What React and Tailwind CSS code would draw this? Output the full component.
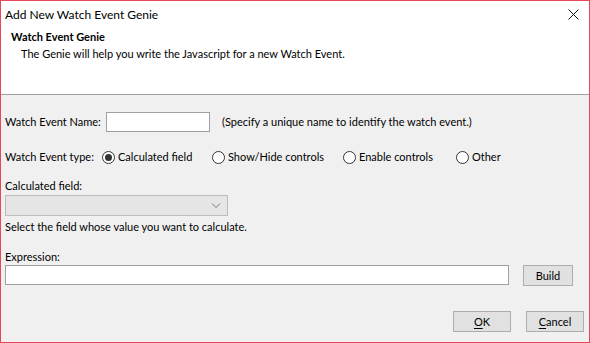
const font = { fontFamily: 'Lato, "Noto Sans", sans-serif' };

function Radio({ label, checked }) {
  return (
    <div className="flex items-center gap-[3px] whitespace-nowrap">
      <span className="w-[13px] h-[13px] shrink-0 rounded-full border border-[#333333] bg-white flex items-center justify-center">
        {checked && <span className="w-[7px] h-[7px] rounded-full bg-[#333333]" />}
      </span>
      <span>{label}</span>
    </div>
  );
}

function Button({ children, className = "" }) {
  return (
    <div
      className={
        "h-[21px] border border-[#adadad] bg-[#e1e1e1] flex items-center justify-center " +
        className
      }
    >
      {children}
    </div>
  );
}

export default function App() {
  return (
    <div
      className="w-[590px] h-[343px] border border-[#e8475b] bg-[#f0f0f0] flex flex-col text-[11px] text-black leading-[16px] whitespace-nowrap"
      style={font}
    >
      <div className="bg-white border-b border-[#a0a0a0] h-[94px] flex flex-col">
        <div className="h-[27px] flex items-center justify-between pl-[4px] pr-[10px]">
          <span className="text-[12px]">Add New Watch Event Genie</span>
          <svg width="11" height="11" viewBox="0 0 11 11">
            <path d="M0.5 0.5 L10.5 10.5 M10.5 0.5 L0.5 10.5" stroke="#111" strokeWidth="1" fill="none" />
          </svg>
        </div>
        <div className="pl-[10px] mt-[1px] font-bold">Watch Event Genie</div>
        <div className="pl-[20px] mt-[1px]">
          The Genie will help you write the Javascript for a new Watch Event.
        </div>
      </div>

      <div className="flex flex-col px-[4px]">
        <div className="flex items-center mt-[17px] h-[20px]">
          <span className="w-[101px] shrink-0">Watch Event Name:</span>
          <div className="w-[104px] h-[20px] shrink-0 border border-[#a0a0a0] bg-white" />
          <span className="ml-[12px]">(Specify a unique name to identify the watch event.)</span>
        </div>

        <div className="flex items-center mt-[15px] h-[20px]">
          <span className="w-[97px] shrink-0">Watch Event type:</span>
          <div className="w-[110px] shrink-0">
            <Radio label="Calculated field" checked />
          </div>
          <div className="w-[131px] shrink-0">
            <Radio label="Show/Hide controls" />
          </div>
          <div className="w-[113px] shrink-0">
            <Radio label="Enable controls" />
          </div>
          <Radio label="Other" />
        </div>

        <div className="mt-[11px]">Calculated field:</div>
        <div className="mt-[1px] w-[223px] h-[21px] border border-[#bcbcbc] bg-[#e5e5e5] flex items-center justify-end pr-[6px]">
          <svg width="10" height="6" viewBox="0 0 10 6">
            <path d="M1 0.5 L5 4.5 L9 0.5" stroke="#7a7a7a" strokeWidth="1" fill="none" />
          </svg>
        </div>
        <div className="mt-[3px]">Select the field whose value you want to calculate.</div>

        <div className="mt-[14px]">Expression:</div>
        <div className="flex items-start mt-[0px]">
          <div className="w-[504px] h-[20px] border border-[#a0a0a0] bg-white" />
          <Button className="ml-[14px] w-[50px]">Build</Button>
        </div>

        <div className="flex justify-end mt-[25px] pr-[1px] gap-[15px]">
          <Button className="w-[58px]">
            <span className="underline underline-offset-2">O</span>K
          </Button>
          <Button className="w-[58px]">
            <span className="underline underline-offset-2">C</span>ancel
          </Button>
        </div>
      </div>
    </div>
  );
}
